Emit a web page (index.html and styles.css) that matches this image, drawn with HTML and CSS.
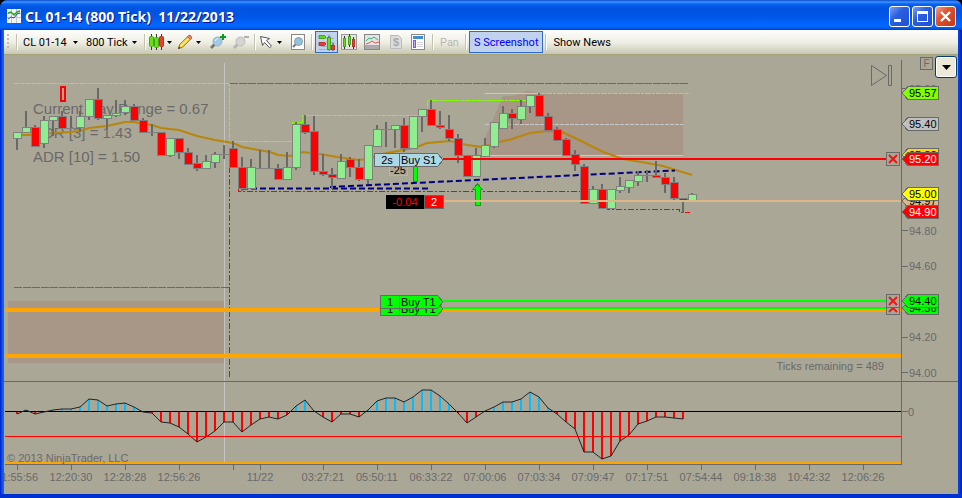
FILE: index.html
```html
<!DOCTYPE html>
<html lang="en">
<head>
    <meta charset="UTF-8">
    <meta name="viewport" content="width=device-width, initial-scale=1.0">
    <title>CL 01-14 (800 Tick)  11/22/2013</title>
    <link rel="stylesheet" href="styles.css">
</head>
<body>

    <div class="window">
        <header class="titlebar">
            <svg class="app-icon" width="14" height="14" viewBox="0 0 14 14">
                <rect width="14" height="14" fill="#f4f4f4"/>
                <path d="M0 4.5h14M0 8.5h14M4.5 0v14M9.5 0v14" stroke="#c5c5d0"/>
                <path d="M1 4l3-1 3 3 3-3 3-1" fill="none" stroke="#2da32d" stroke-width="1.5"/>
                <path d="M1 10l3-2 3 1 3-4 3-1" fill="none" stroke="#2c4f9e"/>
            </svg>
            <h1 class="title">CL 01-14 (800 Tick)&nbsp; 11/22/2013</h1>
            <div class="window-buttons">
                <button class="window-button" aria-label="Minimize">
                    <svg width="19" height="19"><rect x="4" y="12" width="7" height="3" fill="#fff"/></svg>
                </button>
                <button class="window-button" aria-label="Maximize">
                    <svg width="19" height="19"><path d="M4 4h11v11H4zM5 7v7h9V7z" fill="#fff" fill-rule="evenodd"/></svg>
                </button>
                <button class="window-button close" aria-label="Close">
                    <svg width="19" height="19"><path d="M5 5l9 9M14 5l-9 9" stroke="#fff" stroke-width="2.4"/></svg>
                </button>
            </div>
        </header>

        <div class="toolbar">
            <span class="grip"></span>
            <span class="separator"></span>
            <label class="picker instrument">
                <select aria-label="Instrument"><option>CL 01-14</option></select>
                <svg class="caret" width="5" height="3"><path d="M0 0h5L2.5 3z"/></svg>
            </label>
            <label class="picker interval">
                <select aria-label="Interval"><option>800 Tick</option></select>
                <svg class="caret" width="5" height="3"><path d="M0 0h5L2.5 3z"/></svg>
            </label>
            <span class="separator"></span>
            <button class="menu-button" aria-label="Chart style">
                <svg width="16" height="16">
                    <path d="M3.5 0v16M8.5 0v16M13.5 0v16" stroke="#333"/>
                    <rect x="1.5" y="2.5" width="4" height="10" rx="1" fill="#66e016" stroke="#48a01c"/>
                    <rect x="6.5" y="3.5" width="4" height="10" rx="1" fill="#66e016" stroke="#48a01c"/>
                    <rect x="11.5" y="2.5" width="4" height="10" rx="1" fill="#ee3b2d" stroke="#b8342c"/>
                </svg>
                <svg class="caret" width="5" height="3"><path d="M0 0h5L2.5 3z"/></svg>
            </button>
            <button class="menu-button" aria-label="Drawing tools">
                <svg width="16" height="16">
                    <path d="M1.500 14.500l1.200-4L10.500 2.700l2.800 2.800-7.800 7.800z" fill="#ffd83b" stroke="#9b7417"/>
                    <path d="M10.500 2.700l1.400-1.500q2.200-.5 2.800 2.800l-1.400 1.500z" fill="#f08a80" stroke="#c4574e"/>
                    <path d="M4 12l7.500-7.500" stroke="#fff3a0"/>
                    <path d="M1 15l1-2.500 1.500 1.500z" fill="#333"/>
                </svg>
                <svg class="caret" width="5" height="3"><path d="M0 0h5L2.5 3z"/></svg>
            </button>
            <button class="tool" aria-label="Zoom in">
                <svg width="18" height="16">
                    <path d="M6 10l-4 4" stroke="#777" stroke-width="3"/>
                    <circle cx="8.500" cy="7.500" r="4.500" fill="#9ccbe9" stroke="#a3a9ae"/>
                    <path d="M6 7q1-2.500 3-2.500" fill="none" stroke="#e9f6ff"/>
                    <path d="M14 0v6M11 3h6" stroke="#0a9d1c" stroke-width="2"/>
                </svg>
            </button>
            <button class="tool" aria-label="Zoom out" disabled>
                <svg width="18" height="16">
                    <path d="M6 10l-4 4" stroke="#b5b5b2" stroke-width="3"/>
                    <circle cx="8.500" cy="7.500" r="4.500" fill="#d4d4d2" stroke="#bdbdba"/>
                    <path d="M12 3h5" stroke="#b0b0ae" stroke-width="2"/>
                </svg>
            </button>
            <span class="separator"></span>
            <button class="menu-button" aria-label="Pointer">
                <svg width="16" height="16"><path d="M2.500 2.500l9 2-3 2 5 5.500-1.800 1.800-5.200-5.300-2 3z" fill="#fff" stroke="#555"/></svg>
                <svg class="caret" width="5" height="3"><path d="M0 0h5L2.500 3z"/></svg>
            </button>
            <button class="tool data-box" aria-label="Data box">
                <svg width="16" height="16">
                    <rect x="1.500" y=".5" width="13" height="15" fill="#fff" stroke="#888"/>
                    <path d="M6 10l-3 3" stroke="#777" stroke-width="2"/>
                    <circle cx="8.500" cy="7.500" r="4" fill="#8fc3e6" stroke="#999"/>
                </svg>
            </button>
            <span class="separator"></span>
            <button class="tool pressed" aria-label="Chart trader" aria-pressed="true">
                <svg width="17" height="17">
                    <path d="M3 4.500h13M3 8.500h13M3 12.500h13M1 15.500h8" stroke="#a3afc0"/>
                    <path d="M1 1.500h5.500L8 3 6.500 4.500H1z" fill="#5bdb1c" stroke="#48a01c"/>
                    <path d="M1 8.500h5.500L8 10l-1.500 1.500H1z" fill="#ef3b30" stroke="#b8342c"/>
                    <path d="M11 1.500v15M15 9v8" stroke="#333"/>
                    <rect x="9.500" y="3.500" width="3" height="12" fill="#66e016" stroke="#48a01c"/>
                    <rect x="13.500" y="11.500" width="3" height="4" fill="#ef3b30" stroke="#b8342c"/>
                </svg>
            </button>
            <button class="tool" aria-label="Data series">
                <svg width="17" height="17">
                    <rect x=".5" y=".5" width="15" height="15" fill="#e4e4e4" stroke="#999"/>
                    <path d="M3.500 2v13M8.500 0v13M12.500 3v12" stroke="#333"/>
                    <rect x="2.500" y="4.500" width="2" height="8" fill="#66e016" stroke="#48a01c"/>
                    <rect x="7.500" y="2.500" width="2" height="8" fill="#66e016" stroke="#48a01c"/>
                    <rect x="11.500" y="5.500" width="2" height="7" fill="#ef3b30" stroke="#b8342c"/>
                </svg>
            </button>
            <button class="tool" aria-label="Indicators">
                <svg width="17" height="17">
                    <rect x=".5" y=".5" width="15" height="15" fill="#e4e4e4" stroke="#888"/>
                    <rect x="1" y="11" width="14" height="4" fill="#aaa"/>
                    <path d="M2 7l3-3 2 1 3-2 4 3" fill="none" stroke="#36b37a"/>
                    <path d="M2 10l3-1 3-2 3 2 4-1" fill="none" stroke="#e05a5a"/>
                </svg>
            </button>
            <button class="tool" aria-label="Strategies" disabled>
                <svg width="14" height="16">
                    <path d="M1.500 1.500h8l3 3v10h-11z" fill="#dcdcda" stroke="#bbb"/>
                    <text class="dollar" x="7" y="12">$</text>
                </svg>
            </button>
            <button class="tool" aria-label="Properties">
                <svg width="15" height="16">
                    <rect x=".5" y=".5" width="13" height="15" fill="#fff" stroke="#888"/>
                    <rect x="2" y="2" width="10" height="3" fill="#3f8fd0"/>
                    <rect x="2.500" y="6.500" width="2" height="7" fill="#c7a5ff" stroke="#8b50e8"/>
                    <path d="M6 8.500h6M6 10.500h6M6 12.500h6" stroke="#d0d4e0"/>
                </svg>
            </button>
            <span class="separator"></span>
            <button class="text-button" disabled>Pan</button>
            <span class="separator"></span>
            <button class="text-button screenshot">S Screenshot</button>
            <span class="separator"></span>
            <button class="text-button">Show News</button>
        </div>

        <main class="chart">
            <svg class="plot" viewBox="4 55 954 439">
                <defs>
                    <path id="tag" d="M902 0l6-6.500h30v13h-30z"/>
                </defs>

                <!-- chart text -->
                <g class="range-text">
                    <text x="33" y="114">Current Day Range = 0.67</text>
                    <text x="33" y="138">ADR [3] = 1.43</text>
                    <text x="33" y="162">ADR [10] = 1.50</text>
                </g>

                <!-- zones and session break -->
                <path class="zone" d="M8 301h216v62H8zM485 138l18-42h10l14-5 10 2h146v62H488z"/>
                <path class="session" d="M224.500 63v400"/>

                <!-- high, low and range lines -->
                <g class="levels">
                    <path class="high" d="M14 83.500h215.500v58h63v-19h9.500v-7h125.500v-15h98M535 93.500h155"/>
                    <path class="low" d="M229.500 167v210M238.500 188v3.500H582M607.500 206v3.500h72v3H690"/>
                    <path class="range" d="M230 83.500h458M14 287.500h215"/>
                    <path class="gold" d="M485 93.500h55M488 155.500h195"/>
                    <path class="middle" d="M485 124.500h198"/>
                </g>
                <path class="pivot" d="M5 310h896M5 355.500h896"/>
                <path class="average" d="M22 135h13l18-2 18-1 9-1 9-3 18-2 18-4h9l9 2 9 1 9 3 18 2 18 6 18 4 18 3 9 4 28 5 8 3 12 1 13-4 17 2 17 3 21 3 9-1 20-6 16-3 14-3 10-4 23-2 17 4 15 2 13-4 17-4 18-6 17-2 15 1 11 5 12 6 18 9 20 7 24 4 16 3 29 9"/>
                <g class="trend">
                    <path d="M242 188.500h186"/>
                    <path d="M330 187l345-16.500"/>
                </g>

                <g id="candles"></g>

                <path class="marker" d="M61 87h4v14h-4z"/>
                <path class="arrow" d="M413.500 165h4v16.500h-4zM477.500 184l5 5.500h-2.500v15.500h-5v-15.500h-2.500z"/>

                <!-- orders -->
                <path class="order-line stop" d="M443 159h443"/>
                <path class="order-line position" d="M443 201h458"/>
                <path class="order-line target" d="M443 301h443M443 308h443"/>

                <rect class="offset-box" x="389.500" y="163.500" width="18" height="12"/>
                <text class="dark" x="390" y="174">-25</text>
                <path class="flag blue" d="M374.500 153.500h63l5.500 6.500-5.500 6.500h-63zM399.500 153.500v13"/>
                <text class="dark middle-text" x="387" y="164">2s</text>
                <text class="dark" x="401" y="164">Buy S1</text>

                <path class="flag lime" d="M380.500 302.500h57l5.500 6.500-5.500 6.500h-57zM399.500 302.500v13"/>
                <text class="dark middle-text" x="390" y="313">1</text>
                <text class="dark" x="401" y="313">Buy T1</text>
                <path class="flag lime" d="M380.500 295.500h57l5.500 6.500-5.500 6.500h-57zM399.500 295.500v13"/>
                <text class="dark middle-text" x="390" y="306">1</text>
                <text class="dark" x="401" y="306">Buy T1</text>

                <rect x="386" y="195" width="38" height="14"/>
                <text class="loss middle-text" x="405" y="206">-0.04</text>
                <rect class="tag-red" x="424.500" y="195.500" width="19" height="13"/>
                <text class="light middle-text" x="434" y="206">2</text>

                <!-- price axis -->
                <path class="axis" d="M901.500 60v404.500H5M4 381.500h954M902 88.500h6M902 230.500h6M902 266.500h6M902 337.500h6M902 372.500h6M902 411.500h6"/>
                <text x="909" y="93">95.60</text>
                <text x="909" y="235">94.80</text>
                <text x="909" y="270">94.60</text>
                <text x="909" y="341">94.20</text>
                <text x="909" y="377">94.00</text>
                <text x="908" y="416">0</text>

                <use class="tag tag-green" href="#tag" y="93"/>
                <text class="dark" x="909" y="97">95.57</text>
                <use class="tag tag-silver" href="#tag" y="124"/>
                <text class="dark" x="909" y="128">95.40</text>
                <use class="tag tag-gold" href="#tag" y="155"/>
                <text class="dark" x="909" y="159">95.22</text>
                <use class="tag tag-red" href="#tag" y="159"/>
                <text class="light" x="909" y="163">95.20</text>
                <use class="tag tag-tan" href="#tag" y="201"/>
                <text class="dark" x="909" y="205">94.97</text>
                <use class="tag tag-yellow" href="#tag" y="194"/>
                <text class="dark" x="909" y="198">95.00</text>
                <use class="tag tag-red" href="#tag" y="212"/>
                <text class="light" x="909" y="216">94.90</text>
                <use class="tag tag-lime" href="#tag" y="308"/>
                <text class="dark" x="909" y="312">94.36</text>
                <use class="tag tag-lime" href="#tag" y="301"/>
                <text class="dark" x="909" y="305">94.40</text>

                <foreignObject x="886" y="152" width="14" height="14">
                    <button class="cancel" aria-label="Cancel S1">
                        <svg width="12" height="12"><path d="M2 2l8 8M10 2l-8 8"/></svg>
                    </button>
                </foreignObject>
                <foreignObject x="886" y="301" width="14" height="14">
                    <button class="cancel" aria-label="Cancel second T1">
                        <svg width="12" height="12"><path d="M2 2l8 8M10 2l-8 8"/></svg>
                    </button>
                </foreignObject>
                <foreignObject x="886" y="294" width="14" height="14">
                    <button class="cancel" aria-label="Cancel first T1">
                        <svg width="12" height="12"><path d="M2 2l8 8M10 2l-8 8"/></svg>
                    </button>
                </foreignObject>

                <path class="replay" d="M871.500 65.500v20l15-10zM888.500 65.500h3v20h-3z"/>
                <text class="end-text" x="884" y="370">Ticks remaining = 489</text>

                <!-- indicator panel -->
                <g id="bars"></g>
                <path class="zero-line" d="M5 411.500h896"/>
                <polyline id="indicator" class="indicator"/>
                <path class="red-line" d="M5 436.500h896"/>
                <path class="orange-line" d="M5 462.500h896"/>
                <text x="7" y="462">© 2013 NinjaTrader, LLC</text>

                <!-- time axis -->
                <g id="times"></g>
            </svg>

            <button class="fixed-scale">F</button>
            <button class="expand" aria-label="Show chart trader">
                <svg width="9" height="5"><path d="M0 0h9L4.500 5z"/></svg>
            </button>
        </main>
    </div>

    <script src="script.js"></script>
</body>
</html>
```

FILE: styles.css
```css
body {
    margin: 0;
    background-color: #000;
    font-family: Roboto, Tahoma, sans-serif;
    font-size: 11px;
}

button,
select {
    font: inherit;
    color: inherit;
    margin: 0;
    padding: 0;
    border: none;
    background: none;
}

.window {
    box-sizing: border-box;
    padding: 0 4px 4px;
    border-radius: 8px 8px 0 0;
    background: linear-gradient(to right, #0019cf 0, #0855dd 2px, #0f6bf5 4px, #0046f0 calc(100% - 4px), #0038d8 calc(100% - 2px), #00138c 100%);
    box-shadow: inset 0 -4px #0030d0;
}

/* title bar */

.titlebar {
    display: flex;
    align-items: center;
    height: 30px;
    margin: 0 -4px;
    padding: 0 6px 0 7px;
    box-sizing: border-box;
    border-radius: 8px 8px 0 0;
    background: linear-gradient(#0a4bc8 0, #3c94ff 2px, #0a62f0 4px, #0054e0 8px, #0055e5 16px, #0066ff 24px, #0066ff 27px, #0040c8 30px);
}

.title {
    flex: 1;
    margin: 3px 0 0 4px;
    font-family: "Noto Sans", "Trebuchet MS", sans-serif;
    font-size: 14px;
    line-height: 20px;
    color: #fff;
    text-shadow: 1px 1px #0f1089;
}

.app-icon {
    margin-top: 2px;
}

.window-buttons {
    display: flex;
    gap: 2px;
    margin-top: 3px;
}

.window-button {
    width: 21px;
    height: 21px;
    border: 1px solid #fff;
    border-radius: 3px;
    background: linear-gradient(135deg, #7ba0f5, #2a5fe0 40%, #1f4fd2);
}

.window-button svg {
    display: block;
}

.close {
    background: linear-gradient(135deg, #f0a08a, #e0512c 40%, #c8371a);
}

/* toolbar */

.toolbar {
    display: flex;
    align-items: center;
    height: 25px;
    box-sizing: border-box;
    padding-left: 2px;
    border-bottom: 1px solid #a3a27a;
    background: linear-gradient(#fdfdfb, #f0efe6 50%, #c9c7b2);
}

.grip {
    width: 2px;
    height: 16px;
    margin: 0 5px 0 1px;
    background: repeating-linear-gradient(#c1bfb0 0, #c1bfb0 2px, transparent 2px, transparent 4px);
}

.separator {
    width: 1px;
    height: 16px;
    margin: 0 2px;
    border-left: 1px solid #c5c2b0;
    background-color: #fff;
}

.picker {
    display: flex;
    align-items: center;
    box-sizing: border-box;
    padding-left: 3px;
}

.picker select {
    flex: 1;
    appearance: none;
    outline: none;
}

.picker .caret {
    margin-right: 5px;
}

.instrument {
    width: 63px;
}

.interval {
    width: 59px;
}

.menu-button {
    display: flex;
    align-items: center;
    gap: 3px;
    width: 29px;
}

.tool {
    display: flex;
    align-items: center;
    justify-content: center;
    width: 23px;
    height: 22px;
}

.data-box {
    width: 22px;
}

.pressed,
.screenshot {
    box-sizing: border-box;
    border: 1px solid #316ac5;
    background-color: #c1d2ee;
}

.dollar {
    font: bold 11px "Liberation Sans", sans-serif;
    text-anchor: middle;
    fill: #aaa;
}

.text-button {
    height: 22px;
    padding: 0 4px;
    white-space: nowrap;
}

.text-button:disabled {
    color: #b9b7aa;
}

.screenshot {
    color: #00f;
}

/* chart */

.chart {
    position: relative;
    background-color: #aba797;
}

.plot {
    display: block;
    width: 100%;
    shape-rendering: crispEdges;
    font-family: "Liberation Sans", Arial, sans-serif;
    font-size: 11px;
    fill: none;
}

.plot text {
    fill: #696969;
}

.plot rect {
    fill: #000;
}

.plot .range-text {
    font-size: 15px;
}

.plot .dark {
    fill: #000;
}

.plot .light {
    fill: #fff;
}

.plot .loss {
    fill: #f00;
}

.plot .middle-text {
    text-anchor: middle;
}

.plot .end-text {
    text-anchor: end;
}

.zone {
    fill: #a89687;
}

.session {
    stroke: #c4c4c4;
}

.levels path {
    stroke-width: 1;
}

.high {
    stroke: #7fff00;
    stroke-dasharray: 6 1 3 1;
}

.low {
    stroke: #f00;
    stroke-dasharray: 6 2 2 2;
}

.range {
    stroke: #f0f;
    stroke-dasharray: 8 1;
}

.gold {
    stroke: #ffd700;
}

.middle {
    stroke: #c8c8c8;
    stroke-dasharray: 4 1;
}

.pivot {
    stroke: #ffa500;
    stroke-width: 4;
}

.average {
    stroke: #b8860b;
    stroke-width: 2;
    shape-rendering: auto;
}

.trend {
    stroke: #000080;
    stroke-width: 2;
    stroke-dasharray: 6 3;
    shape-rendering: auto;
}

.wick {
    stroke: #696969;
    stroke-width: 2;
}

.doji {
    stroke: #808080;
}

.plot .up,
.plot .down {
    fill: #90ee90;
    stroke: #808080;
}

.plot .down {
    fill: #f00;
}

.marker {
    stroke: #f00;
    stroke-width: 2;
}

.arrow {
    fill: #0f0;
    stroke: #2e8b2e;
}

.order-line {
    stroke-width: 2;
}

.stop {
    stroke: #f00;
}

.position {
    stroke: #deb887;
}

.target {
    stroke: #0f0;
}

.plot .offset-box {
    fill: none;
    stroke: #0ff;
}

.flag,
.tag {
    stroke: #696969;
}

.blue {
    fill: #add8e6;
}

.lime,
.tag-lime {
    fill: #0f0;
}

.tag-green {
    fill: #7fff00;
}

.tag-silver {
    fill: #c0c0c0;
}

.tag-gold {
    fill: #ffd700;
}

.tag-yellow {
    fill: #ff0;
}

.tag-tan {
    fill: #deb887;
}

.plot .tag-red {
    fill: #f00;
    stroke: #696969;
}

.axis,
.replay {
    stroke: #696969;
}

.replay {
    shape-rendering: auto;
}

.cancel {
    display: block;
    box-sizing: border-box;
    width: 14px;
    height: 14px;
    border: 1px solid #696969;
    background-color: #aba797;
}

.cancel svg {
    display: block;
    stroke: #f01414;
    stroke-width: 2;
    shape-rendering: auto;
}

.bar-up,
.bar-down {
    stroke: #00bfff;
    stroke-width: 2;
}

.bar-down {
    stroke: #f00;
}

.zero-line {
    stroke: #000;
}

.indicator {
    stroke: #222;
    shape-rendering: auto;
}

.red-line {
    stroke: #f00;
}

.orange-line {
    stroke: #ffa500;
    stroke-width: 2;
}

.fixed-scale {
    position: absolute;
    top: 2px;
    right: 25px;
    width: 13px;
    height: 13px;
    border: 1px solid #696969;
    font: 10px/11px "Liberation Sans", Arial, sans-serif;
    color: #696969;
}

.expand {
    position: absolute;
    top: 1px;
    right: 1px;
    display: flex;
    align-items: center;
    justify-content: center;
    width: 22px;
    height: 22px;
    border: 1px solid #003c74;
    border-radius: 3px;
    background-color: #ece9d8;
    box-shadow: inset 0 0 0 1px #fff;
}
```

FILE: script.js
```javascript
const FIRST_X = 17;
const STEP = 9;
const ZERO_Y = 411;

// open/close box top, box bottom, high, low, direction (1 up, 0 down, no box when top equals bottom)
const candles = [
    [132, 138, 132, 150, 1], [127, 132, 111, 132, 1], [127, 146, 125, 146, 0], [120, 143, 116, 148, 1],
    [116, 120, 116, 136, 1], [116, 128, 111, 128, 0], [128, 128, 116, 129, 1], [116, 127, 111, 132, 1],
    [99, 116, 99, 120, 1], [99, 118, 88, 120, 0], [115, 118, 115, 129, 1], [113, 115, 100, 117, 1],
    [106, 112, 100, 115, 1], [106, 120, 104, 120, 0], [120, 132, 118, 132, 0], [132, 132, 124, 136, 1],
    [132, 155, 132, 155, 0], [138, 155, 138, 157, 1], [138, 152, 138, 159, 0], [152, 164, 148, 164, 0],
    [163, 168, 155, 171, 0], [161, 168, 155, 168, 1], [154, 162, 152, 168, 1], [154, 154, 145, 159, 1],
    [148, 167, 141, 167, 0], [167, 188, 157, 191, 0], [167, 188, 159, 188, 1], [168, 168, 150, 169, 1],
    [168, 168, 150, 169, 1], [168, 179, 164, 180, 0], [167, 179, 152, 180, 1], [124, 167, 122, 170, 1],
    [124, 132, 115, 134, 0], [131, 171, 116, 175, 0], [171, 174, 154, 176, 0], [174, 177, 168, 189, 0],
    [161, 178, 154, 178, 1], [159, 167, 157, 177, 0], [167, 179, 159, 181, 0], [145, 179, 145, 184, 1],
    [129, 146, 125, 146, 1], [129, 129, 122, 147, 1], [125, 129, 125, 148, 1], [125, 148, 118, 152, 0],
    [116, 148, 116, 148, 1], [109, 116, 109, 132, 1], [109, 125, 100, 125, 0], [125, 127, 111, 129, 0],
    [129, 138, 115, 141, 0], [138, 155, 134, 163, 0], [155, 176, 155, 177, 0], [155, 176, 148, 177, 1],
    [145, 156, 138, 156, 1], [122, 146, 122, 148, 1], [113, 128, 106, 129, 1], [113, 118, 109, 129, 0],
    [106, 119, 100, 124, 1], [95, 106, 95, 113, 1], [95, 116, 93, 116, 0], [116, 130, 113, 130, 0],
    [129, 140, 127, 140, 0], [139, 155, 138, 155, 0], [154, 164, 150, 171, 0], [166, 203, 164, 203, 0],
    [189, 203, 186, 203, 1], [189, 208, 184, 208, 0], [189, 208, 189, 209, 1], [186, 190, 177, 193, 1],
    [180, 187, 180, 193, 1], [175, 181, 171, 186, 1], [175, 175, 170, 182, 1], [175, 177, 161, 177, 0],
    [177, 184, 173, 193, 0], [182, 198, 177, 200, 0], [198, 200, 198, 213, 0], [194, 201, 193, 201, 1]
];

const values = [
    414, 410, 414, 412, 410, 409, 409, 407, 399, 400, 406, 404, 403, 407, 412, 413, 422, 423, 427, 434,
    442, 437, 431, 422, 422, 432, 425, 419, 417, 419, 415, 406, 400, 411, 417, 422, 414, 414, 417, 410,
    401, 398, 398, 402, 397, 390, 390, 396, 404, 413, 423, 417, 411, 407, 402, 402, 399, 392, 397, 408,
    414, 422, 429, 452, 452, 459, 456, 441, 435, 424, 421, 417, 417, 418, 419
];

const times = [
    [17, '11:55:56'], [71, '12:20:30'], [125, '12:28:28'], [179, '12:56:26'], [233, ''], [260, '11/22'],
    [323, '03:27:21'], [377, '05:50:11'], [431, '06:33:22'], [485, '07:00:06'], [539, '07:03:34'],
    [593, '07:09:47'], [647, '07:17:51'], [701, '07:54:44'], [755, '09:18:38'], [809, '10:42:32'],
    [863, '12:06:26']
];

// Candles
let candleMarkup = '';
candles.forEach(([top, bottom, high, low, up], i) => {
    const x = FIRST_X + i * STEP;
    candleMarkup += `<path class="wick" d="M${x} ${high}V${low}"/>`;
    if (top === bottom) {
        candleMarkup += `<path class="doji" d="M${x - 4} ${top + 0.5}h9"/>`;
    } else {
        candleMarkup += `<rect class="${up ? 'up' : 'down'}" x="${x - 3.5}" y="${top + 0.5}" width="8" height="${bottom - top}"/>`;
    }
});
document.getElementById('candles').innerHTML = candleMarkup;

// Indicator bars and line
let barMarkup = '';
values.forEach((y, i) => {
    const x = FIRST_X + i * STEP;
    barMarkup += `<path class="${y < ZERO_Y ? 'bar-up' : 'bar-down'}" d="M${x} ${ZERO_Y}V${y}"/>`;
});
document.getElementById('bars').innerHTML = barMarkup;
document.getElementById('indicator').setAttribute('points', values.map((y, i) => `${FIRST_X + i * STEP},${y}`).join(' '));

// Time axis
let timeMarkup = '';
times.forEach(([x, label]) => {
    timeMarkup += `<path class="axis" d="M${x + 0.5} 464v6"/>`;
    if (label) {
        timeMarkup += `<text class="middle-text" x="${x}" y="481">${label}</text>`;
    }
});
document.getElementById('times').innerHTML = timeMarkup;
```
